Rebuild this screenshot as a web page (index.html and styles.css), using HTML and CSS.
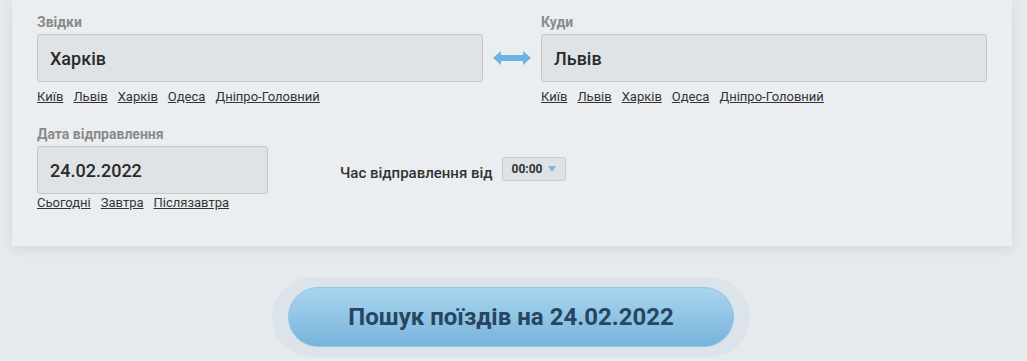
FILE: index.html
```html
<!DOCTYPE html>
<html lang="uk">
<head>
<meta charset="utf-8">
<link rel="stylesheet" href="styles.css">
</head>
<body>
<div class="card">
  <div class="route">
    <div class="field">
      <div class="label">Звідки</div>
      <div class="input">Харків</div>
      <div class="links"><a>Київ</a><a>Львів</a><a>Харків</a><a>Одеса</a><a>Дніпро-Головний</a></div>
    </div>
    <div class="swap">
      <svg width="38" height="16" viewBox="0 0 38 16"><path d="M0 8 L8 1 L8 5 L30 5 L30 1 L38 8 L30 15 L30 11 L8 11 L8 15 Z" fill="#6cb3e0"/></svg>
    </div>
    <div class="field">
      <div class="label">Куди</div>
      <div class="input">Львів</div>
      <div class="links"><a>Київ</a><a>Львів</a><a>Харків</a><a>Одеса</a><a>Дніпро-Головний</a></div>
    </div>
  </div>
  <div class="when">
    <div class="field date">
      <div class="label">Дата відправлення</div>
      <div class="input">24.02.2022</div>
      <div class="links"><a>Сьогодні</a><a>Завтра</a><a>Післязавтра</a></div>
    </div>
    <div class="time">
      <span class="time-label">Час відправлення від</span>
      <span class="select">00:00<span class="caret"></span></span>
    </div>
  </div>
</div>
<div class="search-wrap">
  <div class="search">Пошук поїздів на 24.02.2022</div>
</div>
</body>
</html>
```
FILE: styles.css
```css
html, body { margin: 0; padding: 0; }
body {
  background: #e6eaed;
  font-family: Roboto, "Noto Sans", Arial, sans-serif;
  color: #333;
  width: 1027px;
  height: 361px;
  overflow: hidden;
}
.card {
  width: 1000px;
  height: 246px;
  box-sizing: border-box;
  margin: 0 0 0 12px;
  background: #eaeef1;
  box-shadow: 0 3px 12px rgba(0,0,0,0.09);
  padding: 14px 25px 0 25px;
}
.route {
  display: flex;
  align-items: flex-start;
}
.field { width: 446px; }
.label {
  font-size: 14px;
  font-weight: 700;
  color: #8b8b8b;
  line-height: 17px;
  height: 20px;
}
.input {
  box-sizing: border-box;
  height: 48px;
  background: #dfe3e6;
  border: 1px solid #c2c6ca;
  border-radius: 3px;
  padding-left: 12px;
  display: flex;
  align-items: center;
  font-size: 18px;
  font-weight: 500;
  color: #2a2a2a;
}
.links {
  display: flex;
  gap: 10px;
  margin-top: 7px;
  font-size: 13px;
  line-height: 16px;
}
.links a {
  color: #333;
  text-decoration: underline;
  cursor: pointer;
}
.swap {
  width: 58px;
  height: 48px;
  margin-top: 20px;
  display: flex;
  align-items: center;
  justify-content: center;
}
.when {
  display: flex;
  align-items: flex-start;
  margin-top: 21px;
}
.field.date { width: 231px; }
.field.date .links { margin-top: 1px; }
.time {
  margin-left: 72px;
  margin-top: 30px;
  display: flex;
  align-items: center;
}
.time-label {
  font-size: 15px;
  font-weight: 500;
  color: #333;
  margin-top: 8px;
}
.select {
  margin-left: 9px;
  box-sizing: border-box;
  width: 64px;
  height: 24px;
  background: #dde2e7;
  border: 1px solid #c9ced4;
  border-radius: 2px;
  font-size: 12px;
  font-weight: 700;
  color: #333;
  display: flex;
  align-items: center;
  padding-left: 9px;
}
.caret {
  width: 0; height: 0;
  border-left: 4px solid transparent;
  border-right: 4px solid transparent;
  border-top: 6px solid #7fb6dc;
  margin-left: 5px;
}
.search-wrap {
  width: 478px;
  box-sizing: border-box;
  margin: 31px 0 0 272px;
  background: #dce3ea;
  border-radius: 40px;
  padding: 10px 16px;
}
.search {
  height: 60px;
  box-sizing: border-box;
  border-radius: 30px;
  border: 1px solid #8fc5e8;
  background: linear-gradient(#a9d5f0, #78b3db);
  display: flex;
  align-items: center;
  justify-content: center;
  font-size: 24px;
  font-weight: 700;
  color: #27465f;
}
```
